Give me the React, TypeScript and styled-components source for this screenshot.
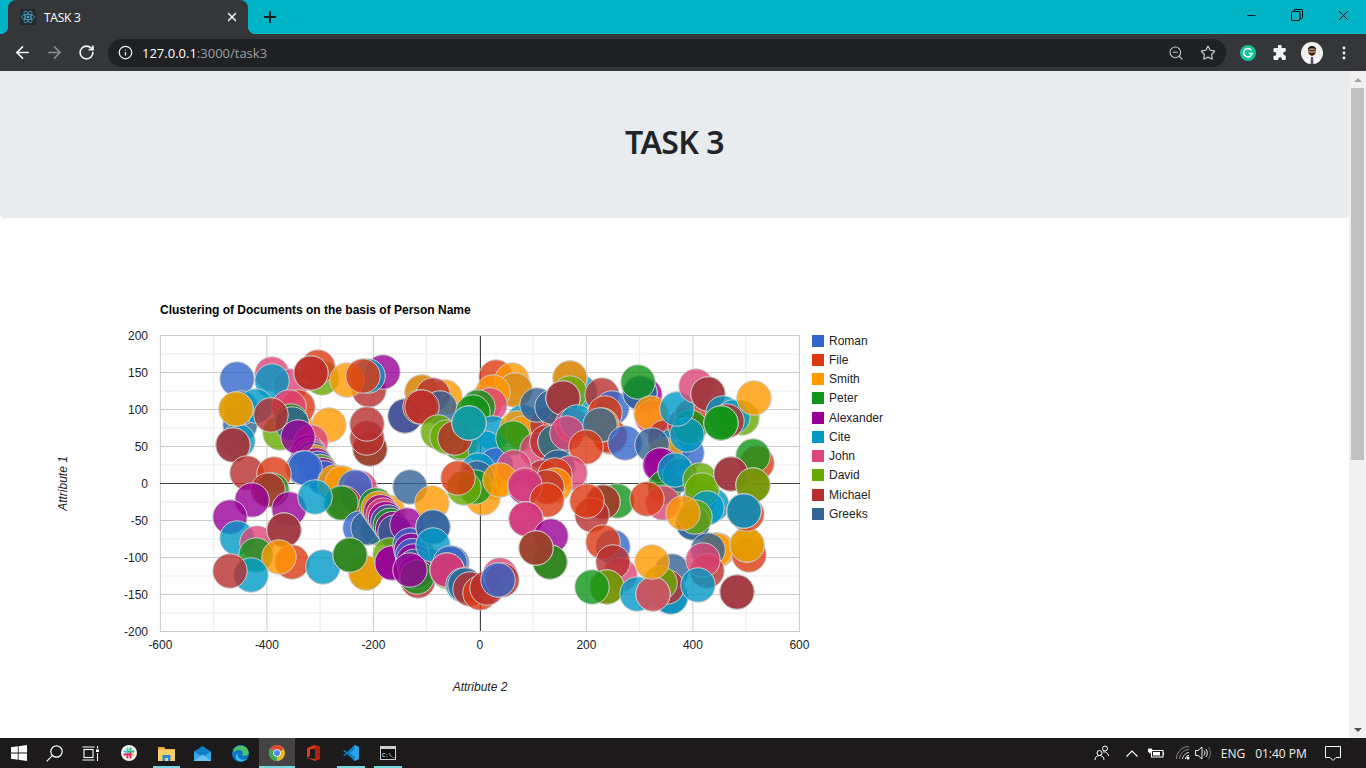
import React from "react";
import styled, { createGlobalStyle } from "styled-components";
import { ArrowLeft, ArrowRight, RotateCw, Info, ZoomOut, Star, X, Plus, Minus } from "lucide-react";

const Global = createGlobalStyle`
  html, body { margin: 0; padding: 0; height: 100%; overflow: hidden; background: #fff; }
  #root { height: 100%; }
`;

const Screen = styled.div`
  width: 1366px; height: 768px; display: flex; flex-direction: column; overflow: hidden;
  font-family: "Open Sans", "Liberation Sans", sans-serif;
`;
const TabStrip = styled.div`
  height: 34px; background: #00b4c6; display: flex; align-items: flex-end; padding-left: 8px; flex: none;
`;
const Tab = styled.div`
  position: relative; width: 240px; height: 34px; box-sizing: border-box; background: #35363a;
  border-radius: 8px 8px 0 0; display: flex; align-items: center; padding: 0 9px 0 12px;
  color: #fff; font-size: 12px; gap: 8px;
  &::before, &::after { content: ""; position: absolute; bottom: 0; width: 8px; height: 8px; }
  &::before { left: -8px; background: radial-gradient(circle at 0 0, transparent 8px, #35363a 8.5px); }
  &::after { right: -8px; background: radial-gradient(circle at 100% 0, transparent 8px, #35363a 8.5px); }
`;
const TabTitle = styled.span` flex: 1; letter-spacing: -0.25px; `;
const NewTab = styled.div` width: 28px; margin-left: 8px; height: 34px; display: flex; align-items: center; justify-content: center; color: #1a1a1a; `;
const WinControls = styled.div` margin-left: auto; display: flex; height: 34px; align-self: flex-start; color: #000; `;
const WinButton = styled.div` width: 46px; height: 30px; display: flex; align-items: center; justify-content: center; `;

const Toolbar = styled.div`
  height: 37px; background: #35363a; display: flex; align-items: center; flex: none; padding-left: 6px;
`;
const NavButton = styled.div<{ $dim?: boolean }>`
  width: 32px; height: 32px; display: flex; align-items: center; justify-content: center;
  color: ${(p) => (p.$dim ? "#8a8b8d" : "#f1f3f4")};
`;
const Omnibox = styled.div`
  margin-left: 6px; width: 1118px; height: 28px; border-radius: 14px; background: #202124;
  display: flex; align-items: center; padding: 0 2px 0 10px; box-sizing: border-box; color: #e8eaed;
`;
const Url = styled.div`
  margin-left: 9px; font-size: 13px; color: #fff; flex: 1; font-family: "Open Sans", sans-serif; font-weight: 500;
  span { color: #9aa0a6; font-weight: 400; }
`;
const OmniAction = styled.div` width: 32px; display: flex; justify-content: center; color: #c4c7c5; `;
const ToolIcon = styled.div<{ $w?: number }>`
  width: ${(p) => p.$w ?? 32}px; height: 32px; display: flex; align-items: center; justify-content: center;
`;
const ExtGroup = styled.div` display: flex; margin-left: 6px; `;

const Viewport = styled.div` flex: 1; display: flex; min-height: 0; `;
const Page = styled.main` width: 1349px; background: #fff; `;
const Jumbotron = styled.header`
  height: 147px; box-sizing: border-box; padding-bottom: 4px; background: #e9ecef; border-radius: 0 0 4px 4px; display: flex; align-items: center; justify-content: center;
`;
const Heading = styled.h1`
  margin: 0; font-family: "Noto Sans", "Open Sans", sans-serif; font-weight: 600; font-size: 32px; letter-spacing: -0.6px; line-height: 1.2; color: #212529;
`;
const ChartRow = styled.section` display: flex; margin-top: 82px; `;
const ChartSvg = styled.svg`
  display: block; flex: none;
  text { font-family: "Liberation Sans", Arial, sans-serif; font-size: 12px; fill: #222; }
`;
const Legend = styled.ul` list-style: none; margin: 31px 0 0; padding: 0; `;
const LegendRow = styled.li`
  height: 19.25px; display: flex; align-items: center; gap: 5px;
  font-family: "Liberation Sans", Arial, sans-serif; font-size: 12px; color: #222;
`;
const Swatch = styled.i<{ $c: string }>` width: 12px; height: 12px; background: ${(p) => p.$c}; display: block; `;

const Scrollbar = styled.div`
  width: 17px; background: #f1f1f1; display: flex; flex-direction: column;
`;
const ScrollArrow = styled.div<{ $up?: boolean }>`
  height: 17px; flex: none; display: flex; align-items: center; justify-content: center;
  &::after { content: ""; border-left: 4px solid transparent; border-right: 4px solid transparent;
    ${(p) => (p.$up ? "border-bottom: 4px solid #a3a3a3;" : "border-top: 4px solid #505050;")} }
`;
const ScrollTrack = styled.div` flex: 1; `;
const ScrollThumb = styled.div` height: 372px; margin: 0 2px; background: #c1c1c1; flex: none; `;

const Taskbar = styled.footer`
  height: 30px; background: #1c1a1a; display: flex; align-items: center; flex: none; color: #fff;
`;
const TaskSlot = styled.div<{ $w?: number; $on?: boolean; $active?: boolean; $pl?: number; $pr?: number }>`
  position: relative; width: ${(p) => p.$w ?? 37}px; height: 30px; display: flex; align-items: center; justify-content: center; flex: none;
  box-sizing: border-box; padding: 0 ${(p) => p.$pr ?? 0}px 0 ${(p) => p.$pl ?? 0}px;
  background: ${(p) => (p.$active ? "#454343" : "transparent")};
  ${(p) => p.$on ? `&::after { content: ""; position: absolute; left: ${p.$active ? 0 : 5}px; right: ${p.$active ? 0 : 4}px; bottom: 0; height: 2px; background: #76d6e0; }` : ""}
`;
const Tray = styled.div` margin-left: auto; display: flex; align-items: center; height: 30px; `;
const TrayText = styled.div<{ $w: number; $pl?: number }>`
  width: ${(p) => p.$w}px; box-sizing: border-box; padding-left: ${(p) => p.$pl ?? 0}px; text-align: center; font-size: 12px; color: #eee; font-family: "Open Sans", sans-serif;
`;

const PAL = ["#3366cc", "#dc3912", "#ff9900", "#109618", "#990099", "#0099c6", "#dd4477", "#66aa00", "#b82e2e", "#316395"];
const NAMES = ["Roman", "File", "Smith", "Peter", "Alexander", "Cite", "John", "David", "Michael", "Greeks"];
const [R, F, S, P, A, C, J, D, M, G] = [0, 1, 2, 3, 4, 5, 6, 7, 8, 9];
type B = [number, number, number];

const run = (x0: number, y0: number, x1: number, y1: number, cs: number[]): B[] =>
  cs.map((c, i) => [c, x0 + ((x1 - x0) * i) / (cs.length - 1), y0 + ((y1 - y0) * i) / (cs.length - 1)] as B);

const BUBBLES: B[] = [
  // top-left
  [R, 237, 379], [J, 272, 374], [J, 290, 386], [C, 272, 381],
  [G, 240, 425], [C, 238, 441], [R, 241, 408], [C, 256, 406], [D, 236, 409], [S, 236, 409], [G, 233, 445], [M, 233, 445],
  [S, 296, 427], [F, 298, 407], [J, 289, 407], [D, 280, 433], [P, 291, 421], [G, 292, 424], [M, 271, 415],
  [D, 322, 378], [F, 318, 367], [F, 311, 373], [M, 311, 373],
  [M, 369, 390], [A, 383, 372], [C, 368, 376], [S, 347, 380], [F, 363, 376],
  [S, 329, 425], [P, 370, 449], [M, 370, 449], [M, 367, 438], [M, 367, 424],
  [S, 445, 397], [G, 422, 392], [S, 422, 392], [M, 433, 395], [G, 440, 408], [A, 405, 416], [G, 405, 416], [F, 420, 407], [M, 422, 407],
  [D, 438, 432], [D, 460, 443], [P, 460, 443], [M, 454, 438],
  [J, 311, 442],
  ...run(308, 452, 324, 478, [A, J, G, S, A, R, D, A, R]),
  [A, 298, 437],
  [R, 303, 468], [R, 305, 468],
  // below the diagonal
  [M, 247, 473], [F, 274, 474], [P, 272, 490], [M, 268, 490],
  [A, 252, 500], [A, 289, 509], [A, 230, 517], [C, 237, 538], [J, 257, 543], [P, 256, 555], [G, 284, 530], [M, 284, 530],
  [F, 292, 562], [S, 279, 557], [C, 251, 575], [M, 230, 571], [C, 323, 567],
  [G, 335, 485], [S, 335, 482], [S, 342, 483], [J, 360, 497], [M, 358, 497], [J, 360, 488], [R, 355, 487],
  [M, 344, 503], [P, 341, 503], [C, 315, 497],
  [S, 388, 512], [P, 378, 528], [R, 360, 528], [G, 368, 528],
  ...run(376, 505, 395, 532, [P, S, A, J, A, G, P, A, G]),
  [A, 407, 525], [D, 366, 573], [S, 366, 573], [M, 350, 555], [P, 350, 555],
  [D, 390, 555], [A, 392, 563], [A, 392, 563],
  [M, 417, 553], [G, 428, 565], [M, 418, 581],
  ...run(410, 545, 417, 577, [R, A, R, A, G, A, P]),
  [A, 410, 570],
  [G, 410, 487], [S, 432, 503], [R, 433, 527], [G, 433, 527], [C, 433, 545],
  [G, 452, 563], [R, 450, 563], [D, 448, 572], [A, 447, 570], [J, 447, 570],
  [C, 463, 585], [G, 465, 585], [M, 470, 589], [F, 480, 593],
  // middle
  [F, 496, 377], [S, 512, 380], [G, 515, 390], [S, 515, 390], [J, 485, 403], [S, 493, 392],
  [D, 462, 442], [J, 490, 405], [P, 478, 407], [P, 473, 412], [D, 447, 437], [C, 493, 433], [C, 485, 448], [M, 455, 438], [D, 469, 423], [C, 469, 423],
  [R, 496, 465], [S, 493, 482], [C, 478, 470], [G, 477, 478], [S, 483, 498], [P, 475, 487], [D, 464, 488], [F, 458, 478],
  [C, 523, 422], [S, 517, 428], [S, 523, 433], [P, 513, 438], [M, 547, 425], [F, 560, 420], [J, 537, 450], [M, 547, 442], [D, 555, 442], [G, 555, 442],
  [G, 537, 405], [G, 552, 407],
  [C, 580, 392], [G, 570, 378], [S, 570, 378], [D, 570, 393], [G, 563, 398], [M, 563, 398], [J, 572, 425], [C, 577, 422], [J, 567, 433],
  [M, 602, 395], [R, 612, 408], [F, 605, 413], [M, 610, 437], [F, 610, 436], [S, 602, 425], [G, 600, 425], [F, 586, 447], [R, 625, 443],
  [G, 558, 467], [J, 570, 473], [M, 543, 477], [F, 555, 475], [S, 555, 485], [M, 547, 487], [J, 514, 467], [S, 500, 480], [A, 525, 487], [J, 525, 485], [F, 547, 500],
  [A, 645, 395], [R, 640, 393], [G, 640, 393], [P, 638, 382],
  [J, 652, 417], [S, 651, 413], [M, 665, 437], [C, 675, 445], [R, 687, 453], [S, 665, 455], [G, 652, 445], [A, 662, 465], [A, 660, 465], [P, 665, 487], [G, 680, 475], [C, 675, 470],
  [M, 685, 425], [F, 692, 416], [P, 690, 427], [C, 687, 435], [C, 677, 409], [J, 696, 386], [G, 708, 394], [M, 708, 394],
  [C, 723, 413], [D, 742, 418], [C, 733, 417], [M, 727, 421], [P, 721, 423], [P, 721, 423], [S, 754, 398],
  [F, 757, 463], [P, 753, 456], [C, 712, 505], [R, 700, 500], [D, 700, 480], [D, 702, 490], [G, 731, 474], [M, 731, 474], [M, 753, 485], [D, 753, 485],
  // lower right
  [A, 526, 519], [J, 526, 519], [A, 551, 536], [M, 550, 562], [P, 550, 562], [P, 536, 548], [M, 536, 548],
  [M, 487, 588], [J, 500, 575], [M, 502, 580], [R, 498, 580],
  [P, 617, 501], [P, 603, 502], [M, 603, 502], [M, 592, 515], [F, 587, 501],
  [R, 613, 547], [F, 603, 542], [J, 620, 575], [M, 613, 562],
  [J, 663, 503], [F, 647, 499], [C, 707, 508], [R, 693, 523], [G, 693, 523], [D, 695, 517], [S, 683, 513],
  [M, 607, 587], [D, 607, 587], [P, 592, 587],
  [C, 637, 594], [G, 670, 597], [C, 671, 597], [G, 672, 571], [M, 667, 587], [D, 660, 583], [D, 653, 594], [J, 653, 594], [S, 652, 562],
  [S, 718, 550], [S, 715, 550], [G, 708, 550], [M, 707, 571], [J, 703, 560], [C, 698, 585],
  [G, 737, 592], [M, 737, 592], [F, 749, 555], [D, 747, 545], [S, 747, 545],
  [F, 747, 514], [D, 744, 511], [C, 744, 511], [M, 744, 511], [C, 744, 511],
];

const xMajor = [0, 1, 2, 3, 4, 5, 6].map((i) => 160.4 + i * 106.5);
const yMajor = [0, 1, 2, 3, 4, 5, 6, 7, 8].map((i) => 335.5 + i * 37);
const xLabels = ["-600", "-400", "-200", "0", "200", "400", "600"];
const yLabels = ["200", "150", "100", "50", "0", "-50", "-100", "-150", "-200"];

const Chart = () => (
  <ChartSvg width={812} height={400} viewBox="0 300 812 400">
    <text x={160} y={314} style={{ fontWeight: 700, fill: "#000" }}>Clustering of Documents on the basis of Person Name</text>
    {xMajor.slice(0, 6).map((x) => <line key={x} x1={x + 53.25} x2={x + 53.25} y1={336} y2={631} stroke="#ebebeb" />)}
    {yMajor.slice(0, 8).map((y) => <line key={y} x1={160} x2={800} y1={y + 18.5} y2={y + 18.5} stroke="#ebebeb" />)}
    {xMajor.map((x) => <line key={x} x1={x} x2={x} y1={336} y2={631.5} stroke="#ccc" />)}
    {yMajor.map((y) => <line key={y} x1={160} x2={800} y1={y} y2={y} stroke="#ccc" />)}
    <line x1={480.5} x2={480.5} y1={336} y2={631} stroke="#444" />
    <line x1={160} x2={800} y1={483.5} y2={483.5} stroke="#444" />
    {BUBBLES.map(([c, x, y], i) => (
      <circle key={i} cx={x} cy={y} r={17.2} fill={PAL[c]} fillOpacity={0.8} stroke="#ccc" strokeWidth={1} />
    ))}
    {xLabels.map((t, i) => <text key={t} x={xMajor[i]} y={649} textAnchor="middle">{t}</text>)}
    {yLabels.map((t, i) => <text key={t} x={148} y={yMajor[i] + 4.5} textAnchor="end">{t}</text>)}
    <text x={480} y={691} textAnchor="middle" style={{ fontStyle: "italic" }}>Attribute 2</text>
    <text transform="translate(67 483.5) rotate(-90)" textAnchor="middle" style={{ fontStyle: "italic" }}>Attribute 1</text>
  </ChartSvg>
);

const ReactIcon = () => (
  <svg width="16" height="16" viewBox="0 0 16 16">
    <rect width="16" height="16" rx="2" fill="#23282d" />
    <g fill="none" stroke="#4aa5c4" strokeWidth="0.8">
      <ellipse cx="8" cy="8" rx="6.5" ry="2.6" />
      <ellipse cx="8" cy="8" rx="6.5" ry="2.6" transform="rotate(60 8 8)" />
      <ellipse cx="8" cy="8" rx="6.5" ry="2.6" transform="rotate(120 8 8)" />
    </g>
    <circle cx="8" cy="8" r="1.3" fill="#4aa5c4" />
  </svg>
);
const Restore = () => (
  <svg width="12" height="12" viewBox="0 0 12 12" fill="none" stroke="#000">
    <rect x="0.5" y="2.5" width="8.5" height="9" rx="1" />
    <path d="M3 2.5V1.5a1 1 0 0 1 1-1h6.5a1 1 0 0 1 1 1v7a1 1 0 0 1-1 1H9" />
  </svg>
);
const Grammarly = () => (
  <svg width="16" height="16" viewBox="0 0 16 16">
    <circle cx="8" cy="8" r="8" fill="#15c39a" />
    <path d="M11.3 5.2A4.2 4.2 0 1 0 12 8.6H8.8" fill="none" stroke="#fff" strokeWidth="1.5" />
  </svg>
);
const PuzzleFill = () => (
  <svg width="16" height="16" viewBox="0 0 16 16" fill="#f1f3f4">
    <path d="M6 1.2a1.8 1.8 0 0 1 3.6 0V3h3.2a1 1 0 0 1 1 1v2.6h-.6a1.9 1.9 0 0 0 0 3.8h.6V14a1 1 0 0 1-1 1H10v-.9a1.9 1.9 0 0 0-3.8 0v.9H2.5a1 1 0 0 1-1-1v-3.2h.9a1.9 1.9 0 0 0 0-3.8h-.9V4a1 1 0 0 1 1-1H6z" />
  </svg>
);
const Avatar = () => (
  <svg width="22" height="22" viewBox="0 0 22 22">
    <clipPath id="av"><circle cx="11" cy="11" r="11" /></clipPath>
    <g clipPath="url(#av)">
      <rect width="22" height="22" fill="#f3f1ef" />
      <path d="M3 22c0-5 3-7 8-7s8 2 8 7z" fill="#fff" stroke="#d8d8d8" strokeWidth=".5" />
      <path d="M10 15h2l.6 7h-3.2z" fill="#5b4a78" />
      <ellipse cx="11" cy="9" rx="4" ry="5" fill="#a97a5c" />
      <path d="M6.8 8C6.500 2.500 15.500 2.500 15.200 8 14 5.800 8 5.800 6.800 8z" fill="#1d1714" />
      <path d="M7.500 10c1 4.500 6 4.500 7 0-.6 1.500-6.400 1.500-7 0z" fill="#2a1f1a" />
      <path d="M7.500 8.500h7" stroke="#222" strokeWidth=".7" />
    </g>
  </svg>
);
const Dots = () => (
  <svg width="4" height="14" viewBox="0 0 4 14" fill="#f1f3f4">
    <circle cx="2" cy="2" r="1.4" /><circle cx="2" cy="7" r="1.4" /><circle cx="2" cy="12" r="1.4" />
  </svg>
);

const WinLogo = () => (
  <svg width="16" height="16" viewBox="0 0 16 16" fill="#fff">
    <path d="M0 2.300 6.800 1.300v6.300H0zM7.600 1.200 16 0v7.600H7.600zM0 8.400h6.800v6.300L0 13.700zM7.600 8.400H16V16l-8.400-1.200z" />
  </svg>
);
const Search = () => (
  <svg width="17" height="17" viewBox="0 0 17 17" fill="none" stroke="#fff" strokeWidth="1.2">
    <circle cx="10.500" cy="6.500" r="5.700" /><path d="M6.300 10.700 .7 16.300" />
  </svg>
);
const TaskView = () => (
  <svg width="17" height="15" viewBox="0 0 17 15" fill="none" stroke="#fff" strokeWidth="1.1">
    <rect x="2" y="3.500" width="9" height="8" /><path d="M.5 1h12M.5 14h12M15.500 0v2.500M15.500 7v8" />
    <rect x="14" y="3.500" width="3" height="2.500" fill="#fff" stroke="none" />
  </svg>
);
const Slack = () => (
  <svg width="16" height="16" viewBox="0 0 16 16">
    <circle cx="8" cy="8" r="8" fill="#f4f0ec" />
    <g strokeWidth="2" strokeLinecap="round">
      <path d="M6.500 3.500v5" stroke="#36c5f0" /><path d="M3.500 9.500h5" stroke="#e01e5a" />
      <path d="M9.500 12.500v-5" stroke="#e01e5a" /><path d="M7.500 6.500h5" stroke="#2eb67d" />
      <path d="M3.500 6.500h1" stroke="#36c5f0" /><path d="M9.500 3.500v1" stroke="#2eb67d" /><path d="M12.500 9.500h-1" stroke="#ecb22e" /><path d="M6.500 12.500v-1" stroke="#e01e5a" />
    </g>
  </svg>
);
const Folder = () => (
  <svg width="17" height="15" viewBox="0 0 17 15">
    <path d="M0 1h6l1.500 2H17v2H0z" fill="#e8a93a" /><rect y="3.500" width="17" height="11.500" fill="#f7cf67" />
    <path d="M4.500 9h8v6h-2.500v-3h-3v3H4.500z" fill="#2b88d8" />
  </svg>
);
const Mail = () => (
  <svg width="17" height="15" viewBox="0 0 17 15">
    <path d="M0 5.500 8.500 0 17 5.500V15H0z" fill="#0f7fc9" /><path d="M0 5.500 8.500 11 17 5.500V15H0z" fill="#38a9e8" /><path d="M0 15 8.500 8.500 17 15z" fill="#6ac3f2" />
  </svg>
);
const Edge = () => (
  <svg width="17" height="17" viewBox="0 0 17 17">
    <circle cx="8.500" cy="8.500" r="8.500" fill="#0f74c4" />
    <path d="M1 6C3 0 12-1 15.500 4c1.800 2.800 1.500 6-1 6.500-2 .3-5 .4-4-1.500 1-2-1-4.500-4-4S1 8 1 6z" fill="#4bc26a" />
    <path d="M6 9c-1 4 3 7 9 5-3 3-8 3-10 1S3.500 9 6 9z" fill="#2ec2e8" />
  </svg>
);
const ChromeIcon = () => (
  <svg width="16" height="16" viewBox="0 0 16 16">
    <circle cx="8" cy="8" r="8" fill="#e8b52c" />
    <path d="M8 8 1.100 4A8 8 0 0 1 14.900 4z" fill="#d9483b" />
    <path d="M8 8 1.100 4A8 8 0 0 0 8 16z" fill="#3aa757" />
    <circle cx="8" cy="8" r="3.800" fill="#fff" /><circle cx="8" cy="8" r="3" fill="#4b8bf0" />
  </svg>
);
const Office = () => (
  <svg width="13" height="16" viewBox="0 0 13 16">
    <path d="M0 3 8 0l5 2v12l-5 2-8-3 8 1V3.500L3 4.500V11L0 13z" fill="#e03a1c" />
    <path d="M8 0l5 2v12l-5 2z" fill="#b3200f" />
  </svg>
);
const VSCode = () => (
  <svg width="16" height="16" viewBox="0 0 16 16">
    <path d="M11.500 0 16 2v12l-4.500 2L4 9l-2.500 2L0 10l3-2-3-2 1.500-1L4 7z" fill="#0f7dc4" />
    <path d="M11.500 0 16 2v12l-4.500 2zM11.500 4.500 7 8l4.500 3.500z" fill="#29a3e8" fillRule="evenodd" />
  </svg>
);
const Cmd = () => (
  <svg width="16" height="14" viewBox="0 0 16 14">
    <rect x=".5" y=".5" width="15" height="13" fill="#111" stroke="#ccc" />
    <rect x="1" y="1" width="14" height="2" fill="#ccc" />
    <text x="2" y="10.500" fontSize="5.500" fill="#fff" fontFamily="Liberation Mono, monospace">C:\_</text>
  </svg>
);

const People = () => (
  <svg width="16" height="16" viewBox="0 0 16 16" fill="none" stroke="#fff">
    <circle cx="5.500" cy="8" r="2.500" /><path d="M1 15c0-3 2-4.500 4.500-4.500S10 12 10 15" />
    <circle cx="11" cy="3.500" r="2.500" /><path d="M9 7c2-.5 5 .5 5.500 4" />
  </svg>
);
const Chevron = () => (
  <svg width="12" height="7" viewBox="0 0 12 7" fill="none" stroke="#fff" strokeWidth="1.2"><path d="M.5 6.500 6 1l5.500 5.500" /></svg>
);
const Battery = () => (
  <svg width="16" height="10" viewBox="0 0 16 10">
    <rect x="3.500" y="2.500" width="11.500" height="6.500" fill="none" stroke="#fff" /><rect x="5" y="4" width="7" height="3.500" fill="#fff" />
    <path d="M15 4.500h1v2.500h-1M0 1h4v2.500l-1 1H1l-1-1zM1 0v1M3 0v1M2 4.500v2" fill="#fff" stroke="#fff" strokeWidth=".5" />
  </svg>
);
const Wifi = () => (
  <svg width="15" height="14" viewBox="0 0 15 14" fill="none" stroke="#888">
    <path d="M.5 13C.5 6 6 .5 13 .5M3.500 13C3.500 8 8 3.500 13 3.500" />
    <path d="M6.500 13C6.500 10 10 6.500 13 6.500" stroke="#ddd" />
    <path d="M9.500 13c0-2 1.500-3.500 3.500-3.500" stroke="#fff" /><circle cx="12" cy="12" r="1.500" fill="#fff" stroke="none" />
  </svg>
);
const Speaker = () => (
  <svg width="16" height="14" viewBox="0 0 16 14" fill="none" stroke="#eee">
    <path d="M.5 4.500h2.500L7 1v12L3 9.500H.5z" /><path d="M9 4.500c1 1.500 1 3.500 0 5M11 3c1.700 2.500 1.700 5.500 0 8" /><path d="M13.500 1c2.500 3.500 2.500 8.500 0 12" stroke="#777" />
  </svg>
);
const Notify = () => (
  <svg width="16" height="15" viewBox="0 0 16 15" fill="none" stroke="#fff"><path d="M.5.500h15v11H11l-3 3-3-3H.5z" /></svg>
);

export default function App() {
  return (
    <Screen>
      <Global />
      <TabStrip>
        <Tab>
          <ReactIcon />
          <TabTitle>TASK 3</TabTitle>
          <X size={14} strokeWidth={2.5} color="#f1f3f4" />
        </Tab>
        <NewTab><Plus size={18} strokeWidth={2.4} /></NewTab>
        <WinControls>
          <WinButton><Minus size={13} strokeWidth={1.6} /></WinButton>
          <WinButton><Restore /></WinButton>
          <WinButton><X size={17} strokeWidth={1.4} /></WinButton>
        </WinControls>
      </TabStrip>
      <Toolbar>
        <NavButton><ArrowLeft size={19} strokeWidth={2.2} /></NavButton>
        <NavButton $dim><ArrowRight size={19} strokeWidth={2.2} /></NavButton>
        <NavButton><RotateCw size={17} strokeWidth={2.4} /></NavButton>
        <Omnibox>
          <Info size={15} strokeWidth={2} color="#f1f3f4" />
          <Url>127.0.0.1<span>:3000/task3</span></Url>
          <OmniAction><ZoomOut size={16} strokeWidth={1.6} /></OmniAction>
          <OmniAction><Star size={16} strokeWidth={1.8} /></OmniAction>
        </Omnibox>
        <ExtGroup>
          <ToolIcon><Grammarly /></ToolIcon>
          <ToolIcon><PuzzleFill /></ToolIcon>
          <ToolIcon><Avatar /></ToolIcon>
          <ToolIcon><Dots /></ToolIcon>
        </ExtGroup>
      </Toolbar>
      <Viewport>
        <Page>
          <Jumbotron><Heading>TASK 3</Heading></Jumbotron>
          <ChartRow>
            <Chart />
            <Legend>
              {NAMES.map((n, i) => (
                <LegendRow key={n}><Swatch $c={PAL[i]} />{n}</LegendRow>
              ))}
            </Legend>
          </ChartRow>
        </Page>
        <Scrollbar>
          <ScrollArrow $up />
          <ScrollThumb />
          <ScrollTrack />
          <ScrollArrow />
        </Scrollbar>
      </Viewport>
      <Taskbar>
        <TaskSlot $w={38}><WinLogo /></TaskSlot>
        <TaskSlot $w={33}><Search /></TaskSlot>
        <TaskSlot $w={38}><TaskView /></TaskSlot>
        <TaskSlot $w={39}><Slack /></TaskSlot>
        <TaskSlot $w={36} $on><Folder /></TaskSlot>
        <TaskSlot $w={37}><Mail /></TaskSlot>
        <TaskSlot $w={38}><Edge /></TaskSlot>
        <TaskSlot $w={36} $on $active><ChromeIcon /></TaskSlot>
        <TaskSlot $w={37}><Office /></TaskSlot>
        <TaskSlot $w={37} $on><VSCode /></TaskSlot>
        <TaskSlot $w={37} $on><Cmd /></TaskSlot>
        <Tray>
          <TaskSlot $w={33} $pr={3}><People /></TaskSlot>
          <TaskSlot $w={24}><Chevron /></TaskSlot>
          <TaskSlot $w={24}><Battery /></TaskSlot>
          <TaskSlot $w={25} $pl={5}><Wifi /></TaskSlot>
          <TaskSlot $w={20}><Speaker /></TaskSlot>
          <TrayText $w={34} $pl={6}>ENG</TrayText>
          <TrayText $w={68}>01:40 PM</TrayText>
          <TaskSlot $w={36}><Notify /></TaskSlot>
          <TaskSlot $w={15} />
        </Tray>
      </Taskbar>
    </Screen>
  );
}
